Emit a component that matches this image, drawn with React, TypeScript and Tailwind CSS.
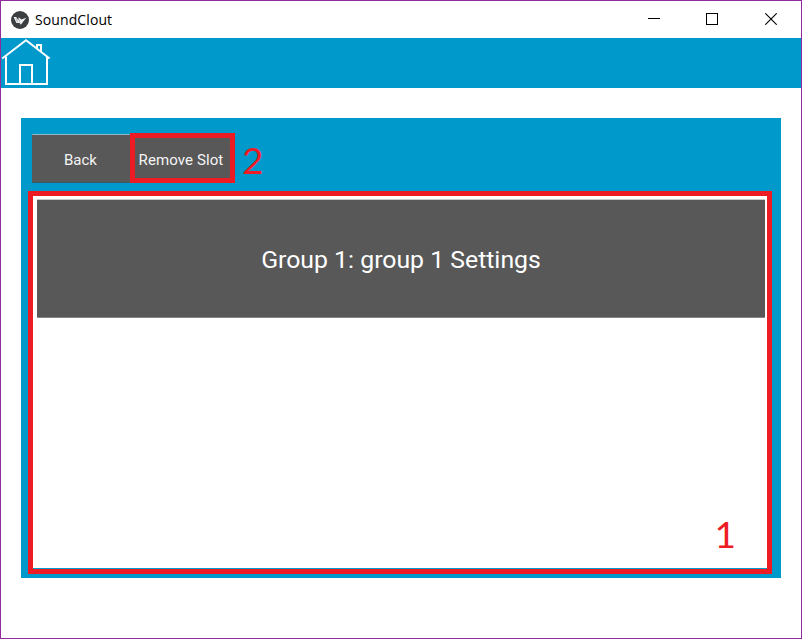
import React from "react";

function Logo() {
  return (
    <svg width="18" height="18" viewBox="0 0 18 18" className="shrink-0">
      <circle cx="9" cy="9" r="9" fill="#3c3f42" />
      <path d="M2.6 6 5.2 6 7.4 9.6 7.6 6.2 10.4 8.6 15.4 6.8 13 9.6 9.8 13.8 8.6 12 5.4 12Z" fill="#f4f4f4" />
      <path d="M4.9 7.2 6.5 11.4M7.8 8 9 11.6" stroke="#8a8a8a" strokeWidth=".6" />
    </svg>
  );
}

function HomeIcon() {
  return (
    <svg width="50" height="50" viewBox="0 0 50 50" fill="none" stroke="#fff" strokeWidth="2">
      <path d="M1.2 20.5 25 2.3 48.6 20.5" />
      <path d="M5 18.5V46H46V18.5" />
      <path d="M19 46V27H31V46" />
      <path d="M36 10V7H40V13" />
    </svg>
  );
}

function TitleBar() {
  return (
    <header className="flex h-[37px] shrink-0 items-center bg-white pl-[10px]">
      <Logo />
      <h1 className="ml-[6px] grow font-['Open_Sans',sans-serif] text-[14px] leading-5 tracking-[0.1px] text-black">SoundClout</h1>
      <div className="flex items-center pb-px">
        <button aria-label="Minimize" className="flex h-9 w-[58px] items-center justify-center">
          <svg width="12" height="12" shapeRendering="crispEdges"><path d="M0 5.5H12" stroke="#000" /></svg>
        </button>
        <button aria-label="Maximize" className="flex h-9 w-[58px] items-center justify-center">
          <svg width="12" height="12" fill="none" shapeRendering="crispEdges"><path d="M.5.5H11.5V11.5H.5Z" stroke="#000" /></svg>
        </button>
        <button aria-label="Close" className="flex h-9 w-[60px] items-center justify-center">
          <svg width="12" height="12"><path d="M.3.3 11.7 11.7M11.7.3.3 11.7" stroke="#000" strokeWidth="1.1" /></svg>
        </button>
      </div>
    </header>
  );
}

export default function App() {
  return (
    <div className="flex h-[639px] w-[802px] flex-col overflow-hidden border border-[#912b9c] bg-white font-[Roboto,sans-serif]">
      <TitleBar />
      <nav className="h-[50px] shrink-0 bg-[#0099cc]">
        <HomeIcon />
      </nav>
      <main className="ml-5 mt-[30px] flex h-[460px] w-[760px] flex-col bg-[#0099cc] pl-[7px] pt-[15px]">
        <div className="flex h-[50px] pl-1">
          <button className="mt-px h-[49px] w-[98px] rounded-[1px] border-b border-t border-b-[#3a5866] border-t-[#8fb9c8] bg-[#585858] pr-px pt-[3px] text-[15px] leading-5 text-[#f5f5f5]">Back</button>
          <button className="h-[50px] w-[105px] whitespace-nowrap border-[5px] border-[#ed1c24] bg-[#585858] pr-[3px] pt-[3px] text-[15px] leading-5 tracking-[0.1px] text-[#f5f5f5]">Remove Slot</button>
          <span className="ml-[7px] font-[Lato,sans-serif] text-[37px] leading-[53px] text-[#ed1c24]">2</span>
        </div>
        <section className="mt-2 flex h-[383px] w-[744px] flex-col border-[5px] border-[#ed1c24] bg-[#0099cc]">
          <div className="flex h-[372px] flex-col bg-white pl-1 pt-[3px]">
            <button className="h-[119px] w-[728px] rounded-[1px] border-b border-t border-b-[#858585] border-t-[#c5c9c9] bg-[#585858] pt-[3px] text-[24.8px] leading-8 text-white">Group 1: group 1 Settings</button>
            <span className="mr-[31px] mt-auto self-end pb-[10px] font-[Lato,sans-serif] text-[37px] leading-[48px] text-[#ed1c24]">1</span>
          </div>
        </section>
      </main>
    </div>
  );
}
